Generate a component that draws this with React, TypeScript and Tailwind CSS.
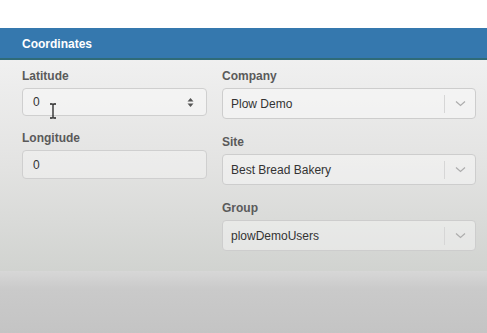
import React from "react";

function Chevron() {
  return (
    <svg width="11" height="7" viewBox="0 0 11 7" className="block">
      <path d="M1 1.5 L5.5 5.5 L10 1.5" fill="none" stroke="#adadad" strokeWidth="1.2" />
    </svg>
  );
}

function Select({ value }: { value: string }) {
  return (
    <div className="flex h-[31px] w-[254px] items-center rounded-[4px] border border-[#cdcdcd] bg-white/40 pl-[8px]">
      <span className="flex-1 text-[12px] text-[#333]">{value}</span>
      <span className="h-[18px] w-px bg-[#d6d6d6]" />
      <span className="flex w-[30px] items-center justify-center">
        <Chevron />
      </span>
    </div>
  );
}

function Label({ children }: { children: React.ReactNode }) {
  return <div className="h-[18px] text-[12px] font-bold leading-[18px] text-[#5a5a5a]">{children}</div>;
}

export default function App() {
  return (
    <div className="h-[333px] w-[487px] overflow-hidden bg-white font-['Liberation_Sans',Arial,sans-serif]">
      <div className="h-[28px] bg-white" />
      <div className="flex h-[32px] items-center border-b-2 border-[#2f6b78] bg-[#3578ae] pl-[22px] pt-[1px] text-[12px] font-bold text-white">
        Coordinates
      </div>
      <div className="flex h-[211px] bg-gradient-to-b from-[#f0f0f0] via-[#e3e3e2] to-[#d1d3d0] pl-[22px] pt-[7px]">
        <div className="w-[185px]">
          <Label>Latitude</Label>
          <div className="relative mt-[3px] flex h-[28px] items-center rounded-[4px] border border-[#cfcfcf] bg-white/40 pl-[10px] pr-[12px] text-[12px] text-[#333]">
            <span className="flex-1">0</span>
            <svg width="7" height="11" viewBox="0 0 7 11" className="block">
              <path d="M3.5 1 L6.5 4.5 L0.5 4.5 Z" fill="#555" />
              <path d="M3.5 10 L6.5 6.5 L0.5 6.5 Z" fill="#555" />
            </svg>
            <svg width="8" height="16" viewBox="0 0 8 16" className="absolute left-[26px] top-[14px]">
              <path d="M1 1 H3 Q4 1.5 5 1 H7 M4 1.5 V14.5 M1 15 H3 Q4 14.5 5 15 H7" fill="none" stroke="#222" strokeWidth="1.3" />
            </svg>
          </div>
          <div className="mt-[13px]">
            <Label>Longitude</Label>
            <div className="mt-[3px] flex h-[29px] items-center rounded-[4px] border border-[#cfcfcf] bg-white/30 pl-[10px] text-[12px] text-[#333]">
              0
            </div>
          </div>
        </div>
        <div className="ml-[15px] flex flex-col gap-[14px]">
          <div>
            <Label>Company</Label>
            <div className="mt-[3px]">
              <Select value="Plow Demo" />
            </div>
          </div>
          <div>
            <Label>Site</Label>
            <div className="mt-[3px]">
              <Select value="Best Bread Bakery" />
            </div>
          </div>
          <div>
            <Label>Group</Label>
            <div className="mt-[3px]">
              <Select value="plowDemoUsers" />
            </div>
          </div>
        </div>
      </div>
      <div className="h-[62px] bg-[linear-gradient(to_bottom,#d7d7d7_0px,#cacaca_18px,#c4c4c4_62px)]" />
    </div>
  );
}
